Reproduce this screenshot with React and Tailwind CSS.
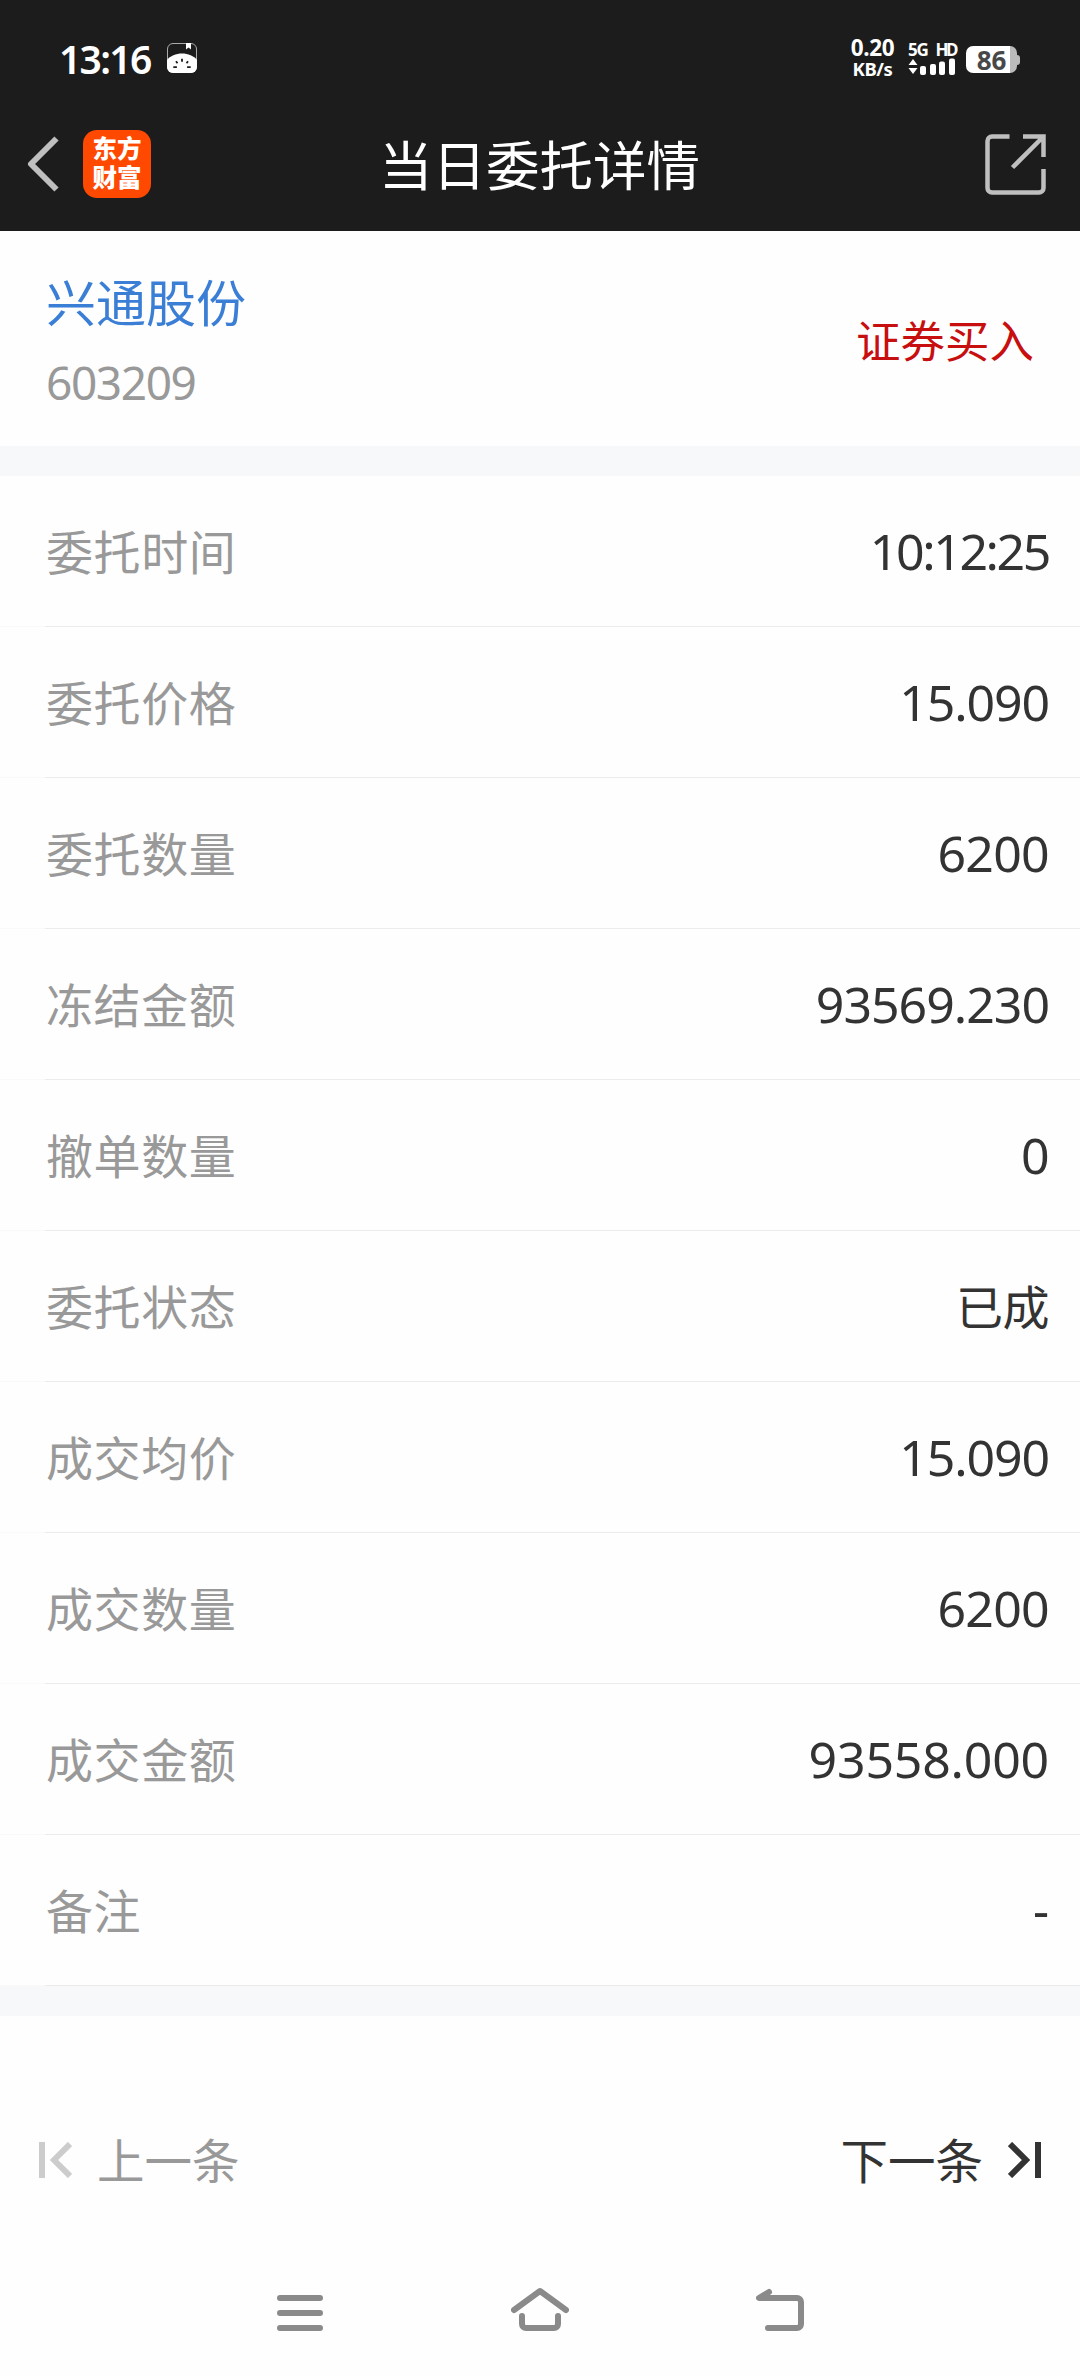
const details = [
    { label: '委托时间', value: '10:12:25', type: 'text-[50px] tracking-[-2.400px]' },
    { label: '委托价格', value: '15.090', type: 'text-[50px] tracking-[-1.100px]' },
    { label: '委托数量', value: '6200', type: 'text-[50px] tracking-[-0.700px]' },
    { label: '冻结金额', value: '93569.230', type: 'text-[50px] tracking-[-1px]' },
    { label: '撤单数量', value: '0', type: 'text-[50px] tracking-[-0.600px]' },
    { label: '委托状态', value: '已成', type: 'text-[47px] tracking-[-0.500px] pt-[2px]' },
    { label: '成交均价', value: '15.090', type: 'text-[50px] tracking-[-1.100px]' },
    { label: '成交数量', value: '6200', type: 'text-[50px] tracking-[-0.700px]' },
    { label: '成交金额', value: '93558.000', type: 'text-[50px] tracking-[-0.200px]' },
    { label: '备注', value: '-', type: 'text-[50px] pb-[3px]' },
];

const StatusBar = () => {
    return (
        <div className="flex h-[97px] items-center justify-between pt-[19px] pr-[60px] pl-[59px] text-white">
            <div className="flex items-center gap-[15px]">
                <span className="w-[93px] text-[39px] leading-none font-semibold tracking-[-1.700px] whitespace-nowrap">13:16</span>
                <svg width="30" height="30" viewBox="0 0 30 30">
                    <rect x="0.5" y="0.5" width="29" height="29" rx="5.5" fill="none" stroke="#aaa" strokeWidth="1" />
                    <path d="M0 17C3 13 9 10.500 15 10.500S27 13 30 17V24a6 6 0 0 1-6 6H6a6 6 0 0 1-6-6Z" fill="#fff" />
                    <path d="M19 0h5v6.500l-2.500-2-2.500 2Z" fill="#fff" />
                    <path d="M15 15.700v3M9 18.200l1.500 2M21 18.200l-1.500 2M6.300 24.200h3.600M20.100 24.200h3.600" stroke="#1c1c1c" strokeWidth="1.800" />
                </svg>
            </div>

            {/* Network speed, signal, battery */}
            <div className="flex items-center">
                <p className="mr-[11px] w-[49px] text-center text-[22.500px] leading-[20px] font-bold tracking-[-0.400px] whitespace-nowrap">
                    0.20
                    <br />
                    <span className="text-[18.500px] tracking-[-0.400px]">KB/s</span>
                </p>
                <div className="mr-[10px] w-[48px]">
                    <div className="flex justify-between text-[17px] leading-[15px] font-bold">
                        <span className="tracking-[-1.200px]">5G</span>
                        <span className="tracking-[-2.500px]">HD</span>
                    </div>
                    <svg width="48" height="17" viewBox="0 0 48 17" fill="#fff" className="mt-px">
                        <path d="M5 1l4.500 6H.5ZM5 16L.5 10h9Z" />
                        <rect x="12" y="8" width="6" height="9" rx="2" />
                        <rect x="22" y="6" width="6" height="11" rx="2" />
                        <rect x="31" y="3.500" width="6" height="13.500" rx="2" />
                        <rect x="41" y="0.500" width="6" height="16.500" rx="2" />
                    </svg>
                </div>
                <div className="flex items-center pt-[3px]">
                    <div className="flex h-[27px] w-[51px] items-center justify-center rounded-[7px] bg-linear-to-r from-white from-86% to-[#bbb] to-86% text-[26px] leading-none font-bold text-[#484848]">
                        86
                    </div>
                    <div className="h-[10px] w-[3px] rounded-r-sm bg-[#bbb]" />
                </div>
            </div>
        </div>
    );
};

const TitleBar = () => {
    return (
        <div className="grid h-[134px] grid-cols-3 items-center pr-[34px] pl-[27px]">
            <div className="flex items-center gap-6">
                <svg width="32" height="56" viewBox="0 0 32 56" fill="none" stroke="#bfbfbf" strokeWidth="6">
                    <path d="M29.500 2.500L4 28l25.500 25.500" strokeLinejoin="round" />
                </svg>
                <div className="h-[68px] w-[68px] rounded-[14px] bg-[#ff4800] pt-[4px] text-center text-[24.500px] leading-[29px] font-black text-white">
                    东方
                    <br />
                    财富
                </div>
            </div>
            <h1 className="pt-[3px] pl-1.5 text-center text-[53.500px] leading-none whitespace-nowrap text-white">当日委托详情</h1>
            <svg className="justify-self-end" width="61" height="61" viewBox="0 0 61 61" fill="none" stroke="#bfbfbf" strokeWidth="4.500">
                <path d="M24.500 2.500H7a4.500 4.500 0 0 0-4.500 4.500v47a4.500 4.500 0 0 0 4.500 4.500h47a4.500 4.500 0 0 0 4.500-4.500V35" />
                <path d="M38 2.500h20.500V23M58 3L27.500 33.500" />
            </svg>
        </div>
    );
};

const DetailRow = ({ label, value, type }) => {
    return (
        <div>
            <div className="flex h-[150px] items-center justify-between pr-[31px] pl-[46px]">
                <span className="pt-[3px] text-[47px] leading-none tracking-[0.600px] text-[#999]">{label}</span>
                <span className={`leading-none text-[#333] ${type}`}>{value}</span>
            </div>
            <div className="flex h-px">
                <div className="w-[45px] bg-[#f9f9f9]" />
                <div className="flex-1 bg-[#ebebeb]" />
            </div>
        </div>
    );
};

const App = () => {
    return (
        <div className="flex h-[2376px] w-[1080px] flex-col overflow-hidden bg-[#fefefe] font-['Noto_Sans','Noto_Sans_CJK_SC',sans-serif]">
            <header className="h-[231px] bg-[#1c1c1c]">
                <StatusBar />
                <TitleBar />
            </header>

            {/* Stock summary */}
            <section className="flex h-[215px] items-center justify-between pt-[5px] pr-[46px] pl-[46px]">
                <div className="flex flex-col gap-[31px]">
                    <span className="text-[50px] leading-none text-[#3a7fd5]">兴通股份</span>
                    <span className="text-[46px] leading-none tracking-[-1.400px] text-[#999]">603209</span>
                </div>
                <span className="text-[44.500px] leading-none text-[#c80f0f]">证券买入</span>
            </section>
            <div className="h-[30px] bg-[#f6f8fa]" />

            <section>
                {details.map((item) => (
                    <DetailRow key={item.label} label={item.label} value={item.value} type={item.type} />
                ))}
            </section>
            <div className="h-[30px] bg-[#f6f8fa]" />

            {/* Previous / next order */}
            <div className="flex h-[288px] items-center justify-between pr-[39px] pl-[39px] text-[47.500px] leading-none">
                <button className="flex items-center gap-[25px] text-[#999]">
                    <svg width="33" height="36" viewBox="0 0 33 36" fill="none" stroke="#ccc" strokeWidth="6">
                        <path d="M3 0v36M31 2L15 18l16 16" />
                    </svg>
                    <span className="pt-[2px]">上一条</span>
                </button>
                <button className="flex items-center gap-[25px] text-[#333]">
                    <span className="pt-[2px]">下一条</span>
                    <svg width="33" height="36" viewBox="0 0 33 36" fill="none" stroke="#333" strokeWidth="6">
                        <path d="M30 0v36M2 2l16 16L2 34" />
                    </svg>
                </button>
            </div>

            {/* System navigation */}
            <nav className="flex h-[72px] items-end justify-between pr-[276px] pb-[45px] pl-[277px]">
                <svg className="shrink-0" width="46" height="44" viewBox="0 0 46 44" fill="none" stroke="#8a8a8a" strokeWidth="6" strokeLinecap="round">
                    <path d="M3 11h40M3 26h40M3 41h40" />
                </svg>
                <svg className="shrink-0" width="58" height="44" viewBox="0 0 58 44" fill="none" stroke="#8a8a8a" strokeWidth="6" strokeLinecap="round" strokeLinejoin="round">
                    <path d="M3 23L29 4l26 19M11 29v8a4 4 0 0 0 4 4h28a4 4 0 0 0 4-4v-8" />
                </svg>
                <svg className="shrink-0" width="48" height="44" viewBox="0 0 48 44" fill="none" stroke="#8a8a8a" strokeWidth="6" strokeLinecap="round" strokeLinejoin="round">
                    <path d="M13 5L3 11h38a4 4 0 0 1 4 4v22a4 4 0 0 1-4 4H12" />
                </svg>
            </nav>
        </div>
    );
};

export default App;
